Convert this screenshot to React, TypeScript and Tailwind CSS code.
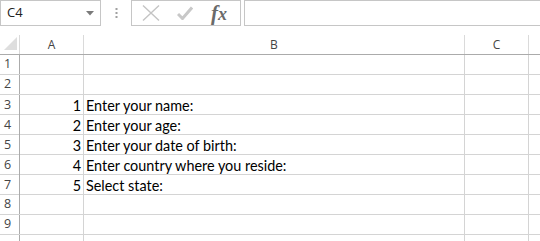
import React from "react";

const rows: { n: string; a: string; b: string }[] = [
  { n: "1", a: "", b: "" },
  { n: "2", a: "", b: "" },
  { n: "3", a: "1", b: "Enter your name:" },
  { n: "4", a: "2", b: "Enter your age:" },
  { n: "5", a: "3", b: "Enter your date of birth:" },
  { n: "6", a: "4", b: "Enter country where you reside:" },
  { n: "7", a: "5", b: "Select state:" },
  { n: "8", a: "", b: "" },
  { n: "9", a: "", b: "" },
  { n: "", a: "", b: "" },
];

const cols = "grid grid-cols-[20px_64px_381px_64px_1fr]";
const cellFont = { fontFamily: "Lato, 'Open Sans', sans-serif" };
const hdrFont = { fontFamily: "'Open Sans', 'Noto Sans', sans-serif" };

export default function App() {
  return (
    <div className="w-[540px] h-[241px] bg-white overflow-hidden flex flex-col">
      {/* toolbar */}
      <div className="flex items-start h-[26px] shrink-0">
        <div className="w-[101px] h-[26px] border border-[#c6c6c6] flex items-center justify-between pl-[6px] pr-[6px] text-[13px] text-[#222]" style={hdrFont}>
          <span>C4</span>
          <svg width="8" height="5" viewBox="0 0 8 5"><path d="M0 0h8L4 4.5z" fill="#7a7a7a" /></svg>
        </div>
        <div className="w-[30px] h-[26px] flex items-center justify-center">
          <svg width="3" height="10" viewBox="0 0 3 10">
            <rect x="0.5" y="0" width="2" height="2" fill="#a0a0a0" />
            <rect x="0.5" y="4" width="2" height="2" fill="#a0a0a0" />
            <rect x="0.5" y="8" width="2" height="2" fill="#a0a0a0" />
          </svg>
        </div>
        <div className="w-[110px] h-[26px] border border-[#c6c6c6] flex items-center">
          <svg className="ml-[9px]" width="20" height="18" viewBox="0 0 20 18">
            <path d="M2 1.5L18 16.5M18 1.5L2 16.5" stroke="#c4c4c4" strokeWidth="1.4" fill="none" />
          </svg>
          <svg className="ml-[16px]" width="16" height="14" viewBox="0 0 16 14">
            <path d="M1 8l4.5 4.5L15 1.5" stroke="#c8c8c8" strokeWidth="3" fill="none" />
          </svg>
          <span className="ml-[18px] text-[21px] italic text-[#6a6a6a] leading-none font-bold" style={{ fontFamily: "'Liberation Serif', serif" }}>
            f<span className="text-[18px]">x</span>
          </span>
        </div>
        <div className="ml-[3px] flex-1 h-[26px] border border-[#c6c6c6] border-r-0" />
      </div>

      {/* sheet */}
      <div className="mt-[9px] flex flex-col">
        <div className={`${cols} h-[20px] border-b border-[#ababab]`}>
          <div className="relative border-r border-[#dadada]">
            <svg className="absolute right-[2px] bottom-[4px]" width="13" height="13" viewBox="0 0 13 13">
              <path d="M13 0V13H0z" fill="#dedede" />
            </svg>
          </div>
          <div className="border-r border-[#dadada] flex items-center justify-center text-[12px] text-[#444]" style={hdrFont}>A</div>
          <div className="border-r border-[#dadada] flex items-center justify-center text-[12px] text-[#444]" style={hdrFont}>B</div>
          <div className="border-r border-[#dadada] flex items-center justify-center text-[12px] text-[#444]" style={hdrFont}>C</div>
          <div />
        </div>
        {rows.map((r, i) => (
          <div key={i} className={`${cols} h-[20px] border-b border-[#d4d4d4]`}>
            <div className="border-r border-[#ababab] flex items-center pl-[4px] text-[12.5px] text-[#444]" style={hdrFont}>{r.n}</div>
            <div className="border-r border-[#d4d4d4] flex items-center justify-end pr-[2px] text-[14.4px] text-black" style={cellFont}>{r.a}</div>
            <div className="border-r border-[#d4d4d4] flex items-center pl-[2px] text-[14.4px] text-black whitespace-nowrap" style={cellFont}>{r.b}</div>
            <div className="border-r border-[#d4d4d4]" />
            <div />
          </div>
        ))}
      </div>
    </div>
  );
}
